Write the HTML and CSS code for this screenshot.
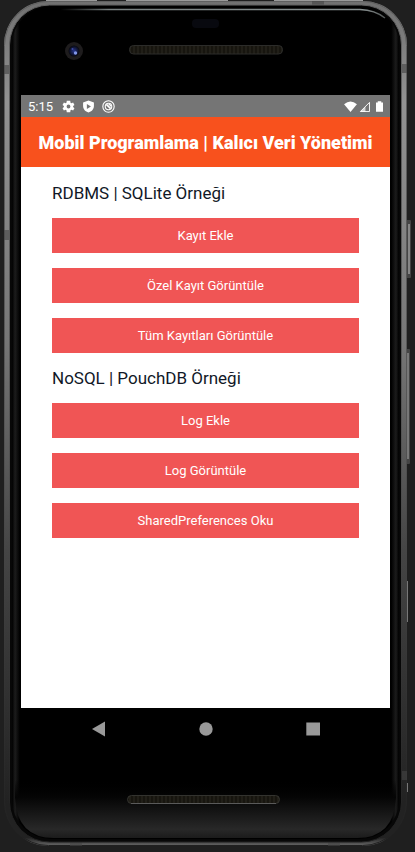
FILE: index.html
```html
<!DOCTYPE html>
<html lang="tr">
<head>
<meta charset="utf-8">
<meta name="viewport" content="width=device-width, initial-scale=1">
<title>Mobil Programlama</title>
<link rel="stylesheet" href="styles.css">
</head>
<body>
<div class="phone">
  <svg class="shell" viewBox="0 0 415 852" preserveAspectRatio="none" aria-hidden="true">
    <defs>
      <linearGradient id="metal" x1="0" y1="0" x2="0" y2="1">
        <stop offset="0" stop-color="#707070"/>
        <stop offset=".12" stop-color="#929292"/>
        <stop offset=".4" stop-color="#777"/>
        <stop offset=".65" stop-color="#454545"/>
        <stop offset=".95" stop-color="#222"/>
        <stop offset=".99" stop-color="#222"/>
        <stop offset="1" stop-color="#686868"/>
      </linearGradient>
      <linearGradient id="edge" x1="0" y1="0" x2="0" y2="1">
        <stop offset="0" stop-color="#606060"/>
        <stop offset=".5" stop-color="#555"/>
        <stop offset="1" stop-color="#202020"/>
      </linearGradient>
      <linearGradient id="chin" x1="0" y1="0" x2="0" y2="1">
        <stop offset="0" stop-color="#000" stop-opacity="0"/>
        <stop offset=".3" stop-color="#050505"/>
        <stop offset=".85" stop-color="#282828"/>
        <stop offset="1" stop-color="#1b1b1b"/>
      </linearGradient>
      <linearGradient id="sides" x1="0" y1="0" x2="1" y2="0">
        <stop offset="0" stop-color="#000"/>
        <stop offset=".008" stop-color="#1c1c1c"/>
        <stop offset=".02" stop-color="#000"/>
        <stop offset=".98" stop-color="#000"/>
        <stop offset=".992" stop-color="#1c1c1c"/>
        <stop offset="1" stop-color="#000"/>
      </linearGradient>
      <linearGradient id="shine" x1="0" y1="0" x2="1" y2="0">
        <stop offset="0" stop-color="#6f7777" stop-opacity="0"/>
        <stop offset=".15" stop-color="#798080"/>
        <stop offset=".93" stop-color="#8a9292"/>
        <stop offset="1" stop-color="#a0a8a8" stop-opacity=".5"/>
      </linearGradient>
      <pattern id="mesh" width="4" height="4" patternUnits="userSpaceOnUse">
        <rect width="4" height="4" fill="#17150f"/>
        <rect x="1" width="2" height="4" fill="#211f18"/>
      </pattern>
      <radialGradient id="lens">
        <stop offset="0" stop-color="#26358c"/>
        <stop offset="1" stop-color="#07070c"/>
      </radialGradient>
    </defs>
    <path d="M46 .5H97M126 .5H228M274 .5H363" stroke="#999"/>
    <rect x="406" y="220" width="5" height="58" rx="1" fill="#444"/>
    <rect x="408" y="224" width="2" height="50" fill="#858585"/>
    <rect x="406" y="349" width="4" height="115" rx="1" fill="#444"/>
    <rect x="407" y="353" width="2" height="106" fill="#777"/>
    <path d="M407.500 581v41M407.500 783v9" stroke="#777"/>
    <rect x="4" y="1" width="403" height="845" rx="44" fill="url(#metal)"/>
    <rect x="4.500" y="1.500" width="402" height="844" rx="44" fill="none" stroke="url(#edge)"/>
    <path d="M4 65h6v9H4zM4 230h6v10H4zM401 64h6v9h-6zM401 771h6v9h-6zM312 1h12v4h-12zM70 841h12v5H70zM328 841h12v5h-12z" fill="#444" opacity=".6"/>
    <rect x="9.500" y="5" width="392" height="837" rx="40" fill="#070707" stroke="url(#edge)"/>
    <rect x="12" y="6" width="387" height="833" rx="39" fill="url(#sides)"/>
    <path d="M15 780H396V798Q394 838 357 838H54Q17 838 15 798Z" fill="url(#chin)"/>
    <path d="M60 9.500H360Q375 10 385 18" fill="none" stroke="url(#shine)" stroke-width="1.500"/>
    <rect x="192" y="19" width="27" height="9" rx="4" fill="#08090f"/>
    <circle cx="74" cy="51" r="9" fill="#1e1c1d"/>
    <circle cx="74" cy="51" r="5.500" fill="url(#lens)"/>
    <circle cx="75.500" cy="53" r="1.700" fill="#8297ea"/>
    <circle cx="72.500" cy="49" r="1" fill="#3d4aa5"/>
    <rect x="129.500" y="45.500" width="153" height="8.500" rx="4" fill="url(#mesh)" stroke="#2c2c2a"/>
    <rect x="127.500" y="795.500" width="152" height="8" rx="4" fill="url(#mesh)" stroke="#33332f"/>
    <path d="M131 803.500H276" stroke="#5a5a5a"/>
  </svg>

  <main class="screen">
    <div class="status">
      <span class="time">5:15</span>
      <svg class="icon" viewBox="0 0 24 24" aria-hidden="true"><path fill="#fff" fill-rule="evenodd" d="M20.500 13a8.500 8.500 0 0 0 0-2l2.500-2-2.500-4.300-3 1.200a8.500 8.500 0 0 0-1.800-1L15.200 1.500H8.800L8.300 4.900a8.500 8.500 0 0 0-1.800 1l-3-1.200L1 9l2.500 2a8.500 8.500 0 0 0 0 2L1 15l2.500 4.300 3-1.200a8.500 8.500 0 0 0 1.800 1l.5 3.400h6.400l.5-3.400a8.500 8.500 0 0 0 1.800-1l3 1.200L23 15zM12 15.500a3.500 3.500 0 1 1 0-7 3.500 3.500 0 0 1 0 7z"/></svg>
      <svg class="icon" viewBox="0 0 24 24" aria-hidden="true"><path fill="#fff" fill-rule="evenodd" d="M12 1 2 4.500V11c0 6 4.500 10.500 10 12 5.500-1.500 10-6 10-12V4.500zM9 7.500l7.500 4.500L9 16.500z"/></svg>
      <svg class="icon" viewBox="0 0 24 24" fill="none" stroke="#fff" aria-hidden="true"><circle cx="12" cy="12" r="10.500" stroke-width="2"/><circle cx="12" cy="12" r="6" stroke-width="2"/><path stroke-width="3" d="m8 8 8 8"/><path stroke-width="2" d="M12 8q4 0 4 4"/></svg>
      <span class="signals">
        <svg class="wifi" viewBox="0 0 14 12" aria-hidden="true"><path fill="#fff" d="M0 3.500Q7-2.500 14 3.500L7 12z"/></svg>
        <svg class="cell" viewBox="0 0 12 12" aria-hidden="true"><path fill="none" stroke="#fff" d="M1.500 11.500 11.500 1.500v10z"/><path fill="#fff" d="m1 12 6-6v6z" opacity=".7"/></svg>
        <svg class="battery" viewBox="0 0 8 12" aria-hidden="true"><path fill="#fff" d="M2 0h4v1.500h2V12H0V1.500h2z"/></svg>
      </span>
    </div>
    <header class="bar"><h1>Mobil Programlama | Kalıcı Veri Yönetimi</h1></header>
    <div class="content">
      <section>
        <h2>RDBMS | SQLite Örneği</h2>
        <div class="actions">
          <button type="button">Kayıt Ekle</button>
          <button type="button">Özel Kayıt Görüntüle</button>
          <button type="button">Tüm Kayıtları Görüntüle</button>
        </div>
      </section>
      <section>
        <h2>NoSQL | PouchDB Örneği</h2>
        <div class="actions">
          <button type="button">Log Ekle</button>
          <button type="button">Log Görüntüle</button>
          <button type="button">SharedPreferences Oku</button>
        </div>
      </section>
    </div>
  </main>

  <nav class="keys">
    <button type="button" aria-label="Geri"><svg viewBox="0 0 16 16"><path fill="#999" d="M1 8 14 .5v15z"/></svg></button>
    <button type="button" aria-label="Ana ekran"><svg viewBox="0 0 16 16"><circle cx="8" cy="8" r="6.700" fill="#999"/></svg></button>
    <button type="button" aria-label="Son uygulamalar"><svg viewBox="0 0 16 16"><path fill="#999" d="M1.300 1.500H15v13H1.300z"/></svg></button>
  </nav>
</div>
</body>
</html>
```
FILE: styles.css
```css
* {
  box-sizing: border-box;
}

body {
  margin: 0;
  background: #1f1f1f;
  font-family: Roboto, "Liberation Sans", sans-serif;
}

.phone {
  position: relative;
  display: flex;
  flex-direction: column;
  min-height: 100vh;
  padding: 95px 25px 102px 21px;
}

.shell {
  position: absolute;
  inset: 0;
  width: 100%;
  height: 100%;
}

.screen {
  position: relative;
  flex: 1;
  background: #fff;
}

.status {
  display: flex;
  align-items: center;
  gap: 7px;
  height: 22px;
  padding: 0 7px;
  background: #757575;
  color: #fff;
  font-size: 13px;
}

.time {
  margin-right: 2px;
}

.icon {
  width: 13px;
  height: 13px;
}

.signals {
  display: flex;
  align-items: center;
  gap: 2px;
  margin-left: auto;
}

.wifi {
  width: 13px;
  height: 11px;
}

.cell {
  width: 11px;
  height: 11px;
}

.battery {
  width: 7px;
  height: 11px;
  margin-left: 4px;
}

.bar {
  display: flex;
  align-items: center;
  justify-content: center;
  height: 50px;
  background: #f8511d;
  color: #fff;
}

h1 {
  margin: 0;
  font-size: 18px;
  font-weight: 900;
  white-space: nowrap;
}

.content {
  padding: 1px 31px 0;
}

h2 {
  margin: 0;
  color: #111827;
  font-size: 17px;
  font-weight: 400;
  line-height: 50px;
}

.actions {
  display: flex;
  flex-direction: column;
  gap: 15px;
}

.actions button {
  height: 35px;
  padding: 0;
  border: 0;
  background: #f05555;
  color: #fff;
  font: 13px Roboto, "Liberation Sans", sans-serif;
}

.keys {
  position: relative;
  display: flex;
  align-items: center;
  justify-content: center;
  gap: 91px;
  height: 42px;
}

.keys button {
  width: 16px;
  height: 16px;
  padding: 0;
  border: 0;
  background: none;
}

.keys svg {
  display: block;
}
```
